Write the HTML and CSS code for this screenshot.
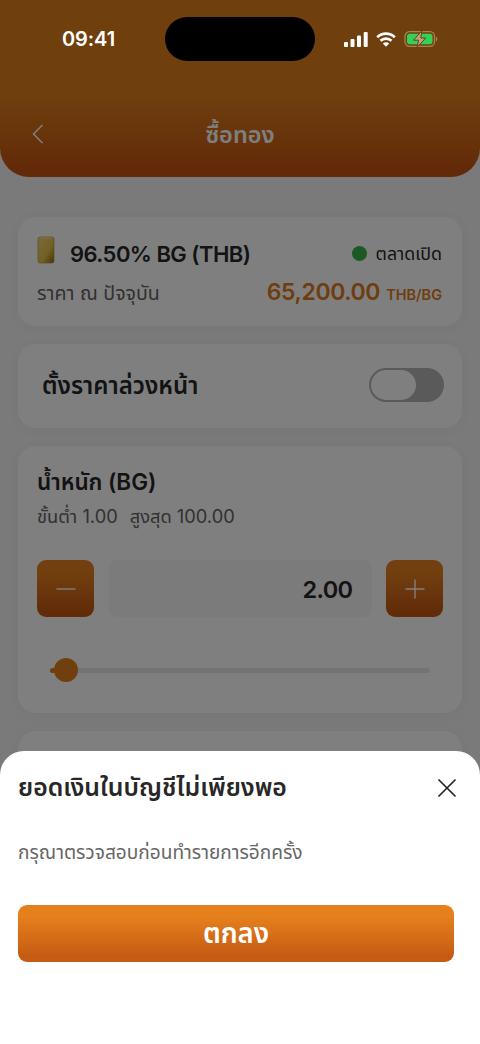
FILE: index.html
```
<!DOCTYPE html>
<html lang="th">
<head>
<meta charset="utf-8">
<meta name="viewport" content="width=device-width">
<title>ซื้อทอง</title>
<link rel="stylesheet" href="styles.css">
</head>
<body>
<div class="phone">
  <header class="header">
    <svg class="back" viewBox="0 0 12 20"><path d="M10.5 1 1.5 10l9 9"/></svg>
    <h1 class="title">ซื้อทอง</h1>
  </header>
  <main class="content">
    <section class="card price">
      <div class="row">
        <svg class="gold" viewBox="0 0 18 28">
          <defs><linearGradient id="gold" x1="0" y1="0" x2="1" y2="1"><stop offset="0" stop-color="#efd878"/><stop offset=".6" stop-color="#e4c04b"/><stop offset="1" stop-color="#8f6610"/></linearGradient></defs>
          <rect x="1" y="1" width="16" height="26" rx="2" fill="url(#gold)" stroke="#b8963c" stroke-width=".7"/>
          <path d="M2.5 2h13" stroke="#f5e3a0"/>
        </svg>
        <h2 class="product">96.50% BG (THB)</h2>
        <span class="dot"></span>
        <span class="market">ตลาดเปิด</span>
      </div>
      <div class="row row-price">
        <span class="now">ราคา ณ ปัจจุบัน</span>
        <span class="amount">65,200.00</span>
        <span class="unit">THB/BG</span>
      </div>
    </section>
    <section class="card preset">
      <h2 class="preset-title">ตั้งราคาล่วงหน้า</h2>
      <span class="switch"><span class="knob"></span></span>
    </section>
    <section class="card weight">
      <h2 class="weight-title">น้ำหนัก (BG)</h2>
      <p class="limits"><span class="min">ขั้นต่ำ 1.00</span><span class="max">สูงสุด 100.00</span></p>
      <div class="stepper">
        <button class="step"><svg viewBox="0 0 20 20"><path d="M.5 10h19"/></svg></button>
        <div class="value">2.00</div>
        <button class="step"><svg viewBox="0 0 20 20"><path d="M.5 10h19M10 .5v19"/></svg></button>
      </div>
      <div class="slider"><span class="fill"></span><span class="thumb"></span></div>
    </section>
    <section class="card next"></section>
  </main>
  <div class="scrim"></div>
  <div class="status">
    <span class="clock">09:41</span>
    <span class="island"></span>
    <svg class="signal" viewBox="0 0 24 15"><rect x="0" y="10" width="4" height="5" rx="1"/><rect x="6.5" y="7" width="4" height="8" rx="1"/><rect x="13" y="3.5" width="4" height="11.500" rx="1"/><rect x="19.700" y="0" width="4" height="15" rx="1"/></svg>
    <svg class="wifi" viewBox="0 0 20 15"><path d="M1.200 5.200C6.200.4 13.800.4 18.800 5.200M4.500 8.700c3.100-2.900 7.900-2.900 11 0"/><path class="solid" d="M10 14.800 6.800 11.500c1.800-1.700 4.600-1.700 6.400 0z"/></svg>
    <svg class="battery" viewBox="0 0 34 18"><rect class="shell" x="1" y="1.700" width="29.500" height="14.600" rx="4.500"/><rect class="charge" x="3" y="3.700" width="25.500" height="10.600" rx="2.700"/><path class="cap" d="M32 6.500c1.800.8 1.800 4.200 0 5z"/><path class="bolt" d="M17.800.8 9.500 10.200h5.200l-1.700 7L21.800 8h-5z"/></svg>
  </div>
  <section class="sheet">
    <div class="sheet-head">
      <h2 class="sheet-title">ยอดเงินในบัญชีไม่เพียงพอ</h2>
      <svg class="close" viewBox="0 0 18 18"><path d="m1 1 16 16M17 1 1 17"/></svg>
    </div>
    <p class="message">กรุณาตรวจสอบก่อนทำรายการอีกครั้ง</p>
    <button class="confirm">ตกลง</button>
  </section>
</div>
</body>
</html>
```
FILE: styles.css
```
* { box-sizing: border-box; margin: 0; padding: 0; }
body { font-family: Inter, "Noto Sans Thai", "Noto Sans", sans-serif; color: #272727; }
h1, h2, p, span, button { white-space: nowrap; }
.phone { position: relative; width: 480px; height: 1044px; overflow: hidden; background: #f4f4f4; }
.header { height: 177px; padding: 114px 32px 0; border-radius: 0 0 29px 29px; background: linear-gradient(#de7e1c 0 55%, #c65412 96%); display: grid; grid-template-columns: 12px 1fr 12px; align-items: start; }
.back { width: 12px; height: 20px; margin-top: 10px; fill: none; stroke: #fff; stroke-width: 1.5; }
.title { font-size: 23.500px; line-height: 41px; font-weight: 600; color: #fff; text-align: center; }
.content { padding: 40px 18px 0; display: flex; flex-direction: column; gap: 18px; }
.card { background: #fff; border-radius: 18px; box-shadow: 0 2px 14px rgba(0,0,0,.035); flex: none; }
.price { height: 109px; padding: 16px 20px 0 19px; }
.row { display: flex; align-items: center; height: 42px; }
.gold { width: 18px; height: 28px; margin-top: -8px; }
.product { margin-left: 15px; font-size: 22px; font-weight: 600; letter-spacing: -.55px; line-height: 42px; }
.dot { width: 15px; height: 15px; border-radius: 50%; background: #38b248; margin: -2px 9px 0 auto; }
.market { font-size: 17.800px; line-height: 42px; }
.row-price { height: 34px; align-items: baseline; }
.now { font-size: 19.600px; line-height: 34px; color: #626262; }
.amount { margin-left: auto; font-size: 23px; line-height: 34px; font-weight: 600; letter-spacing: -.4px; color: #dc7b1d; }
.unit { margin-left: 6px; font-size: 14.500px; font-weight: 600; color: #dc7b1d; }
.preset { height: 84px; padding: 0 18px 0 24px; display: flex; align-items: center; justify-content: space-between; }
.preset-title { font-size: 24px; font-weight: 600; line-height: 50px; }
.switch { width: 75px; height: 34px; margin-top: -3px; padding: 2px; border-radius: 17px; background: #b4b4b4; }
.knob { display: block; width: 45px; height: 30px; border-radius: 15px; background: #fff; }
.weight { height: 267px; padding: 19px 19px 0; }
.weight-title { font-size: 22.500px; line-height: 34px; font-weight: 600; letter-spacing: -.05px; }
.limits { display: flex; gap: 12px; font-size: 18.300px; line-height: 34px; height: 32px; color: #626262; }
.stepper { display: grid; grid-template-columns: 57px 263px 57px; grid-template-rows: 57px; justify-content: space-between; margin-top: 29px; height: 57px; }
.step { border: 0; border-radius: 9px; background: linear-gradient(#e4811e 20%, #c65813 90%); display: grid; place-items: center; }
.step svg { width: 20px; height: 20px; stroke: #fff; stroke-width: 1.400; fill: none; }
.value { background: #f6f6f6; border-radius: 8px; padding-right: 19px; text-align: right; font-size: 23.500px; line-height: 60px; font-weight: 600; letter-spacing: -.6px; }
.slider { position: relative; margin: 51px 13px 0 13px; height: 5px; border-radius: 3px; background: #e6e6e6; }
.fill { display: block; width: 16px; height: 5px; border-radius: 3px; background: #e07f1c; }
.thumb { position: absolute; left: 4px; top: -10px; width: 24px; height: 24px; border-radius: 50%; background: #e07f1c; }
.next { height: 80px; }
.scrim { position: absolute; inset: 0; background: rgba(0,0,0,.5); }
.status { position: absolute; top: 0; left: 0; width: 480px; height: 78px; padding: 0 41px 0 62px; display: flex; align-items: center; }
.clock { width: 103px; font-size: 20px; font-weight: 600; letter-spacing: -.1px; color: #fff; }
.island { width: 150px; height: 44px; border-radius: 22px; background: #000; }
.signal { width: 24px; height: 15px; margin-left: 29px; fill: #fff; }
.wifi { width: 20px; height: 15px; margin-left: 8px; fill: none; stroke: #fff; stroke-width: 2.700; }
.wifi .solid { fill: #fff; stroke: none; }
.battery { width: 34px; height: 18px; margin-left: 8px; flex: none; }
.shell { fill: none; stroke: #a98252; stroke-width: 1.300; }
.charge { fill: #32d158; }
.cap { fill: #a98252; }
.bolt { fill: #bea37f; stroke: #6f3f0e; stroke-width: 1; }
.sheet { position: absolute; left: 0; bottom: 0; width: 480px; height: 293px; padding: 12px 26px 0 18px; background: #fff; border-radius: 24px 24px 0 0; }
.sheet-head { height: 48px; display: flex; align-items: center; justify-content: space-between; }
.sheet-title { font-size: 24.800px; line-height: 48px; font-weight: 600; }
.close { width: 18px; height: 18px; margin: 2px -2px 0 0; fill: none; stroke: #222; stroke-width: 1.700; stroke-linecap: round; }
.message { margin-top: 21px; height: 40px; line-height: 40px; font-size: 19.100px; color: #666; }
.confirm { display: block; width: 436px; height: 57px; margin-top: 33px; border: 0; border-radius: 9px; background: linear-gradient(#e5801d 20%, #c65c13 88%); color: #fff; font: 600 27.500px/57px Inter, "Noto Sans Thai", "Noto Sans", sans-serif; }
```
